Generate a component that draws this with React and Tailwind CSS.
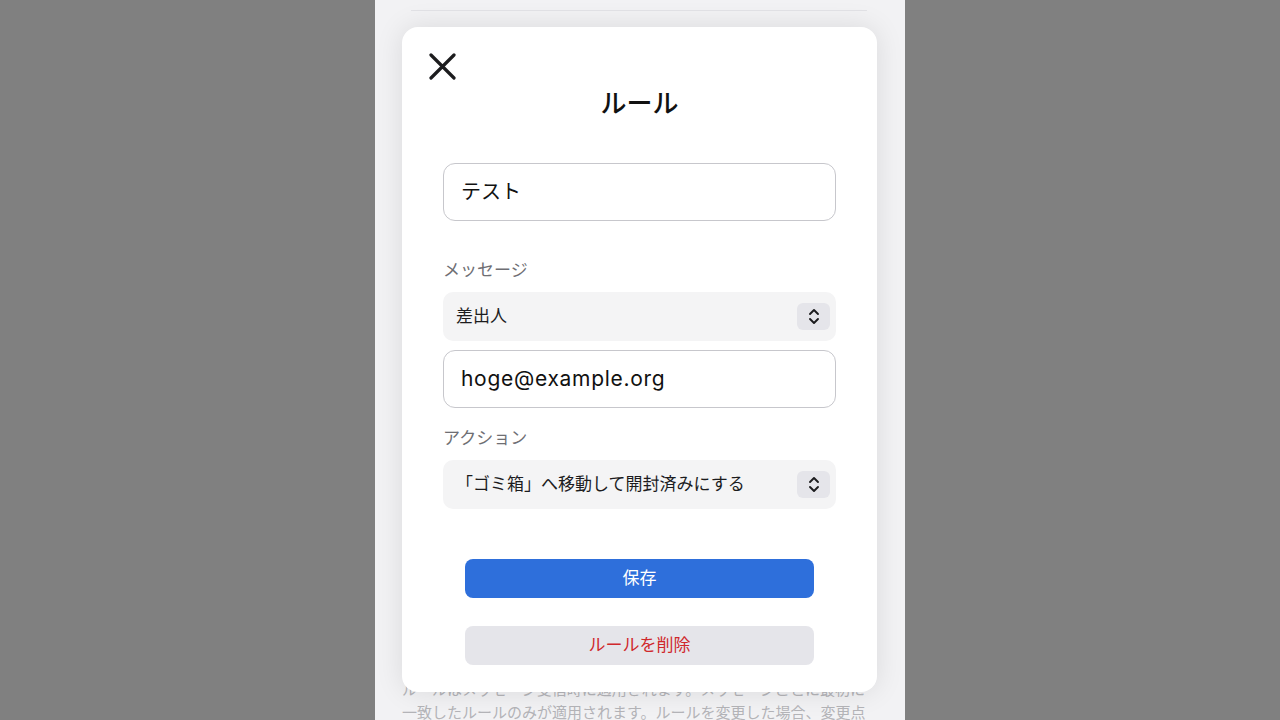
// App.jsx — rule edit sheet

const font = { fontFamily: '"Inter", "Noto Sans CJK JP", sans-serif' };

function CloseIcon() {
  return (
    <svg width="27" height="27" viewBox="0 0 27 27" fill="none">
      <path d="M2 2L25 25M25 2L2 25" stroke="#1c1c1e" strokeWidth="3.2" strokeLinecap="round" />
    </svg>
  );
}

function Chevrons() {
  return (
    <div className="flex items-center justify-center w-[33px] h-[27px] rounded-[6px] bg-[#e5e5ea]">
      <svg width="12" height="17" viewBox="0 0 12 17" fill="none">
        <path d="M2 6L6 2L10 6M2 11L6 15L10 11" stroke="#1c1c1e" strokeWidth="1.9" strokeLinecap="round" strokeLinejoin="round" />
      </svg>
    </div>
  );
}

function Select({ value }) {
  return (
    <div className="flex items-center justify-between h-[49px] rounded-[10px] bg-[#f4f4f5] pl-[13px] pr-[6px]">
      <span className="text-[17px] text-[#1c1c1e]">{value}</span>
      <Chevrons />
    </div>
  );
}

function TextField({ value, latin }) {
  return (
    <div className="flex items-center h-[58px] rounded-[12px] border border-[#c7c7cc] px-[17px]">
      <span className={latin ? 'text-[21px] tracking-[0.7px] text-[#111]' : 'text-[20px] text-[#111]'}>{value}</span>
    </div>
  );
}

export default function App() {
  return (
    <div className="h-screen w-full bg-[#808080] flex justify-center overflow-hidden" style={font}>
      <div className="relative w-[530px] h-full bg-[#f2f2f4] overflow-hidden">
        {/* page behind the sheet */}
        <div className="pt-[10px] ml-[36px] mr-[38px] border-b border-[#e2e2e6]" />
        <div className="px-[27px] pt-[667px] text-[15px] leading-[23px] text-[#b4b4b8] whitespace-nowrap">
          ルールはメッセージ受信時に適用されます。メッセージごとに最初に
          <br />
          一致したルールのみが適用されます。ルールを変更した場合、変更点
        </div>

        {/* sheet */}
        <div className="absolute left-[27px] top-[27px] w-[475px] h-[665px] rounded-[16px] bg-white shadow-[0_0_28px_rgba(0,0,0,0.10)]">
          <div className="pl-[27px] pt-[26px]">
            <CloseIcon />
          </div>
          <h2 className="mt-[8px] text-center text-[26px] leading-[32px] font-medium text-[#111]">ルール</h2>

          <div className="px-[41px] mt-[43px]">
            <TextField value="テスト" />

            <div className="mt-[37px] text-[17px] leading-[24px] text-[#6e6e73]">メッセージ</div>
            <div className="mt-[10px]">
              <Select value="差出人" />
            </div>
            <div className="mt-[9px]">
              <TextField value="hoge@example.org" latin />
            </div>

            <div className="mt-[18px] text-[17px] leading-[24px] text-[#6e6e73]">アクション</div>
            <div className="mt-[10px]">
              <Select value="「ゴミ箱」へ移動して開封済みにする" />
            </div>
          </div>

          <div className="px-[63px] mt-[50px] flex flex-col gap-[28px]">
            <button className="h-[39px] rounded-[8px] bg-[#2e6fdb] text-white text-[17px]">保存</button>
            <button className="h-[39px] rounded-[8px] bg-[#e5e5ea] text-[#d0282c] text-[17px]">ルールを削除</button>
          </div>
        </div>
      </div>
    </div>
  );
}
